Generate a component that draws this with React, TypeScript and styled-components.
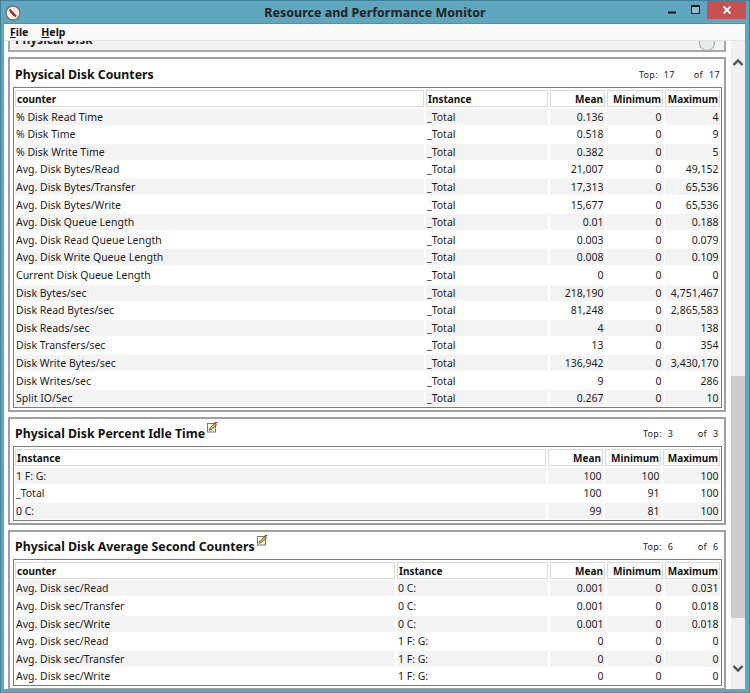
import React from "react";
import styled, { createGlobalStyle } from "styled-components";

const Global = createGlobalStyle`
  html, body { margin: 0; padding: 0; background: #5fa6bf; }
  body { width: 750px; height: 693px; overflow: hidden; font-family: "Noto Sans", "Liberation Sans", sans-serif; color: #111; }
`;

const Frame = styled.div`
  width: 750px;
  height: 693px;
  box-sizing: border-box;
  background: #5fa6bf;
  border: 1px solid #3f8198;
  border-bottom-color: #4b93ab;
  display: flex;
  flex-direction: column;
  padding: 0 4px 3px 3px;
`;

const TitleBar = styled.div`
  height: 22px;
  flex: none;
  display: grid;
  grid-template-columns: 60px 1fr 60px;
  align-items: center;
  margin-right: -1px;
  position: relative;
`;

const AppIcon = styled.svg`
  width: 16px;
  height: 16px;
  margin: 1px 0 0 1px;
`;

const WindowTitle = styled.div`
  text-align: center;
  font: bold 12.5px "Noto Sans", sans-serif;
  color: #222;
`;

const Controls = styled.div`
  position: absolute;
  right: 0;
  top: 0;
  display: flex;
  align-items: flex-start;
`;

const MinimizeIcon = styled.svg`
  width: 23px;
  height: 18px;
  display: block;
`;

const MaximizeIcon = styled.svg`
  width: 17px;
  height: 18px;
  display: block;
`;

const CloseButton = styled.div`
  width: 39px;
  height: 18px;
  background: #c75050;
  display: flex;
  align-items: center;
  justify-content: center;
`;

const MenuBar = styled.div`
  height: 16px;
  flex: none;
  background: #fafafa;
  display: flex;
  align-items: center;
  gap: 13px;
  padding-left: 6px;
  border-top: 1px solid #4b93ab;
  border-bottom: 1px solid #e4e4e4;
  margin-right: 0;
`;

const MenuItem = styled.span`
  font: bold 10.5px "Noto Sans", sans-serif;
  color: #111;
  u { text-decoration-thickness: 1px; text-underline-offset: 1px; }
`;

const Body = styled.div`
  flex: 1;
  min-height: 0;
  display: flex;
  background: #fff;
`;

const Content = styled.div`
  flex: 1;
  min-width: 0;
  padding: 0 4px 0 4px;
  display: flex;
  flex-direction: column;
  gap: 5px;
  overflow: hidden;
`;

const ClippedPanel = styled.div`
  height: 11px;
  flex: none;
  box-sizing: border-box;
  background: #f2f2f2;
  border: 2px solid #a8a8a8;
  border-top: 0;
  display: flex;
  justify-content: space-between;
  align-items: flex-end;
  padding: 0 9px 0 5px;
  overflow: hidden;
`;

const ClippedTitle = styled.div`
  font: bold 12px "Noto Sans", sans-serif;
  line-height: 14px;
  margin-bottom: 3px;
  color: #222;
`;

const Collapse = styled.div`
  width: 16px;
  height: 16px;
  margin-bottom: -1px;
  border-radius: 50%;
  background: #e8ece4;
  border: 1px solid #9aa6b4;
  box-sizing: border-box;
  flex: none;
`;

const Panel = styled.section`
  flex: none;
  background: #fff;
  border: 2px solid #a0a0a0;
  padding: 0 2px 2px 3px;
`;

const PanelHead = styled.div<{ $h: number }>`
  height: ${(p) => p.$h}px;
  box-sizing: border-box;
  display: flex;
  align-items: center;
  padding: 2px 3px 0 2px;
`;

const PanelTitle = styled.h2`
  margin: 0;
  font: bold 12.3px "Noto Sans", sans-serif;
  color: #111;
  display: flex;
  align-items: flex-start;
`;

const NoteIcon = styled.svg`
  width: 11px;
  height: 11px;
  margin: -3px 0 0 2px;
`;

const TopInfo = styled.div`
  margin-left: auto;
  display: flex;
  font: 9px "Noto Sans", sans-serif;
  letter-spacing: 0.3px;
  color: #222;
`;

const TopLabel = styled.span`
  white-space: pre;
`;

const Count = styled.span<{ $w: number }>`
  width: ${(p) => p.$w}px;
  padding-left: 6px;
  box-sizing: border-box;
`;

const Table = styled.div<{ $cols: string }>`
  border: 1px solid #7d7d7d;
  padding: 2px 1px 1px 1px;
  display: grid;
  grid-template-columns: ${(p) => p.$cols};
  column-gap: 2px;
  row-gap: 1.6px;
`;

const Head = styled.div<{ $num?: boolean }>`
  height: 17px;
  box-sizing: border-box;
  border: 1px solid #dadada;
  background: #fff;
  font: bold 10px/16px "Noto Sans", sans-serif;
  padding: 0 ${(p) => (p.$num ? "1px" : "1px")};
  color: #111;
  text-align: ${(p) => (p.$num ? "right" : "left")};
  overflow: hidden;
  white-space: nowrap;
`;

const Cell = styled.div<{ $num?: boolean; $odd: boolean }>`
  height: 16px;
  background: ${(p) => (p.$odd ? "#f3f3f3" : "#fff")};
  font: 10.5px/16px "Noto Sans", sans-serif;
  color: #1c1c1c;
  padding: 0 ${(p) => (p.$num ? "1.5px" : "1px")} 0 1px;
  text-align: ${(p) => (p.$num ? "right" : "left")};
  overflow: hidden;
  white-space: nowrap;
`;

const Scrollbar = styled.div`
  width: 14px;
  flex: none;
  margin-left: 1px;
  background: #f0f0f0;
  display: flex;
  flex-direction: column;
`;

const ScrollArrow = styled.svg`
  width: 14px;
  height: 40px;
  display: block;
  flex: none;
`;

const Track = styled.div`
  flex: 1;
  min-height: 0;
  display: flex;
  flex-direction: column;
`;

const TrackSpace = styled.div<{ $h?: number }>`
  height: ${(p) => (p.$h ? `${p.$h}px` : "auto")};
  flex: ${(p) => (p.$h ? "none" : 1)};
`;

const Thumb = styled.div`
  height: 242px;
  flex: none;
  background: #cdcdcd;
`;

type Row = string[];

function DataTable({ cols, heads, rows }: { cols: string; heads: string[]; rows: Row[] }) {
  const firstNum = heads.length - 3;
  return (
    <Table $cols={cols}>
      {heads.map((h, i) => (
        <Head key={h} $num={i >= firstNum}>{h}</Head>
      ))}
      {rows.map((r, ri) =>
        r.map((c, ci) => (
          <Cell key={`${ri}-${ci}`} $odd={ri % 2 === 0} $num={ci >= firstNum}>{c}</Cell>
        ))
      )}
    </Table>
  );
}

const Note = () => (
  <NoteIcon viewBox="0 0 11 11">
    <rect x="0.5" y="1.5" width="8" height="8.5" fill="#fdfbe8" stroke="#777" />
    <path d="M2 8 L3 6 L8 1.5 L9.5 3 L4.5 7.5 Z" fill="#e9c23c" stroke="#333" strokeWidth="0.7" />
    <path d="M8 1 L10 0" stroke="#d3222a" strokeWidth="1.6" />
  </NoteIcon>
);

const counters: Row[] = [
  ["% Disk Read Time", "_Total", "0.136", "0", "4"],
  ["% Disk Time", "_Total", "0.518", "0", "9"],
  ["% Disk Write Time", "_Total", "0.382", "0", "5"],
  ["Avg. Disk Bytes/Read", "_Total", "21,007", "0", "49,152"],
  ["Avg. Disk Bytes/Transfer", "_Total", "17,313", "0", "65,536"],
  ["Avg. Disk Bytes/Write", "_Total", "15,677", "0", "65,536"],
  ["Avg. Disk Queue Length", "_Total", "0.01", "0", "0.188"],
  ["Avg. Disk Read Queue Length", "_Total", "0.003", "0", "0.079"],
  ["Avg. Disk Write Queue Length", "_Total", "0.008", "0", "0.109"],
  ["Current Disk Queue Length", "_Total", "0", "0", "0"],
  ["Disk Bytes/sec", "_Total", "218,190", "0", "4,751,467"],
  ["Disk Read Bytes/sec", "_Total", "81,248", "0", "2,865,583"],
  ["Disk Reads/sec", "_Total", "4", "0", "138"],
  ["Disk Transfers/sec", "_Total", "13", "0", "354"],
  ["Disk Write Bytes/sec", "_Total", "136,942", "0", "3,430,170"],
  ["Disk Writes/sec", "_Total", "9", "0", "286"],
  ["Split IO/Sec", "_Total", "0.267", "0", "10"],
];

const idle: Row[] = [
  ["1 F: G:", "100", "100", "100"],
  ["_Total", "100", "91", "100"],
  ["0 C:", "99", "81", "100"],
];

const avg: Row[] = [
  ["Avg. Disk sec/Read", "0 C:", "0.001", "0", "0.031"],
  ["Avg. Disk sec/Transfer", "0 C:", "0.001", "0", "0.018"],
  ["Avg. Disk sec/Write", "0 C:", "0.001", "0", "0.018"],
  ["Avg. Disk sec/Read", "1 F: G:", "0", "0", "0"],
  ["Avg. Disk sec/Transfer", "1 F: G:", "0", "0", "0"],
  ["Avg. Disk sec/Write", "1 F: G:", "0", "0", "0"],
];

export default function App() {
  return (
    <Frame>
      <Global />
      <TitleBar>
        <AppIcon viewBox="0 0 16 16">
          <circle cx="8" cy="8" r="7" fill="#f2efe6" stroke="#7a6f66" strokeWidth="1.4" />
          <path d="M4.5 4.5 L11 11.5" stroke="#c0222a" strokeWidth="2" />
          <path d="M5 7 L9 11" stroke="#333" strokeWidth="0.8" />
        </AppIcon>
        <WindowTitle>Resource and Performance Monitor</WindowTitle>
        <span />
        <Controls>
          <MinimizeIcon viewBox="0 0 23 18">
            <rect x="1" y="10.5" width="8" height="2" fill="#111" />
          </MinimizeIcon>
          <MaximizeIcon viewBox="0 0 17 18">
            <rect x="1.5" y="4.5" width="8" height="8" fill="#8fbfd0" stroke="#111" />
            <rect x="1" y="4" width="9" height="2" fill="#111" />
          </MaximizeIcon>
          <CloseButton>
            <svg width="10" height="10" viewBox="0 0 10 10">
              <path d="M1.5 1.5 L8.5 8.5 M8.5 1.5 L1.5 8.5" stroke="#fff" strokeWidth="1.8" />
            </svg>
          </CloseButton>
        </Controls>
      </TitleBar>
      <MenuBar>
        <MenuItem><u>F</u>ile</MenuItem>
        <MenuItem><u>H</u>elp</MenuItem>
      </MenuBar>
      <Body>
        <Content>
          <ClippedPanel>
            <ClippedTitle>Physical Disk</ClippedTitle>
            <Collapse />
          </ClippedPanel>
          <Panel>
            <PanelHead $h={28}>
              <PanelTitle>Physical Disk Counters</PanelTitle>
              <TopInfo>
                <TopLabel>Top:</TopLabel>
                <Count $w={36}>17</Count>
                <TopLabel>of</TopLabel>
                <Count $w={16}>17</Count>
              </TopInfo>
            </PanelHead>
            <DataTable
              cols="409px 122px 55px 56px 1fr"
              heads={["counter", "Instance", "Mean", "Minimum", "Maximum"]}
              rows={counters}
            />
          </Panel>
          <Panel>
            <PanelHead $h={27}>
              <PanelTitle>Physical Disk Percent Idle Time<Note /></PanelTitle>
              <TopInfo>
                <TopLabel>Top:</TopLabel>
                <Count $w={36}>3</Count>
                <TopLabel>of</TopLabel>
                <Count $w={12}>3</Count>
              </TopInfo>
            </PanelHead>
            <DataTable
              cols="531px 55px 56px 1fr"
              heads={["Instance", "Mean", "Minimum", "Maximum"]}
              rows={idle}
            />
          </Panel>
          <Panel>
            <PanelHead $h={27}>
              <PanelTitle>Physical Disk Average Second Counters<Note /></PanelTitle>
              <TopInfo>
                <TopLabel>Top:</TopLabel>
                <Count $w={36}>6</Count>
                <TopLabel>of</TopLabel>
                <Count $w={12}>6</Count>
              </TopInfo>
            </PanelHead>
            <DataTable
              cols="380px 151px 55px 56px 1fr"
              heads={["counter", "Instance", "Mean", "Minimum", "Maximum"]}
              rows={avg}
            />
          </Panel>
        </Content>
        <Scrollbar>
          <ScrollArrow viewBox="0 0 14 40">
            <path d="M2.5 24 L7 19.5 L11.5 24" fill="none" stroke="#505050" strokeWidth="2.4" />
          </ScrollArrow>
          <Track>
            <TrackSpace $h={295} />
            <Thumb />
            <TrackSpace />
          </Track>
          <ScrollArrow viewBox="0 0 14 40">
            <path d="M2.5 17 L7 21.5 L11.5 17" fill="none" stroke="#505050" strokeWidth="2.4" />
          </ScrollArrow>
        </Scrollbar>
      </Body>
    </Frame>
  );
}
